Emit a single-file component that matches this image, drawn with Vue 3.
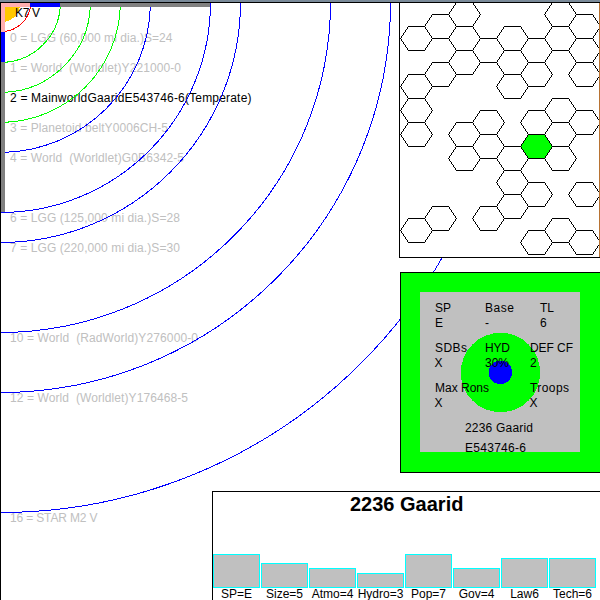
<script setup>
const orbits = [
  [60, '#00ff00'], [90, '#00ff00'], [120, '#00ff00'],
  [150, '#0000ff'], [210, '#0000ff'], [240, '#0000ff'], [330, '#0000ff'],
  [390, '#0000ff'], [510, '#0000ff'],
]
const bodies = [
  { y: 42, t: '0 = LGG (60,000 mi dia.)S=24', w: 162.5 },
  { y: 72, t: '1 = World\u00a0 (Worldlet)Y221000-0', w: 171 },
  { y: 102, t: '2 = MainworldGaaridE543746-6(Temperate)', w: 241.5, main: true },
  { y: 132, t: '3 = Planetoid beltY0006CH-5', w: 158 },
  { y: 162, t: '4 = World\u00a0 (Worldlet)G0B6342-5', w: 174 },
  { y: 222, t: '6 = LGG (125,000 mi dia.)S=28', w: 170 },
  { y: 252, t: '7 = LGG (220,000 mi dia.)S=30', w: 170 },
  { y: 342, t: '10 = World\u00a0 (RadWorld)Y276000-0', w: 188 },
  { y: 402, t: '12 = World\u00a0 (Worldlet)Y176468-5', w: 178 },
  { y: 522, t: '16 = STAR M2 V', w: 87.5 },
]
const columns = [
  [38, 86, 110, 134, 230],
  [26, 74, 218],
  [14, 38, 62, 134, 158],
  [50, 122, 146, 218],
  [38, 62, 86, 158, 182, 206],
  [50, 74, 122, 194, 242],
  [14, 38, 110, 134, 158, 230],
  [26, 50, 74, 122, 194, 242],
]
const hex = (x, y) =>
  `M${x} ${y}L${x + 8} ${y - 12}H${x + 24}L${x + 32} ${y}L${x + 24} ${y + 12}H${x + 8}Z`
const hexes = columns.map((ys, c) => ys.map((y) => hex(400.5 + 24 * c, y + 0.5)).join('')).join('')
const facts = [
  [435, 312, 'SP', 16], [485, 312, 'Base', 29], [540, 312, 'TL', 14],
  [435, 327, 'E', 8], [485, 327, '-', 4], [540, 327, '6', 7],
  [435, 352, 'SDBs', 32], [485, 352, 'HYD', 25], [530, 352, 'DEF CF', 43],
  [434.5, 367, 'X', 8], [485, 367, '30%', 24], [530, 367, '2', 7],
  [435, 392, 'Max Rons', 54], [530, 392, 'Troops', 39],
  [434.5, 407, 'X', 8], [529.5, 407, 'X', 8],
  [465, 432, '2236 Gaarid', 68], [465, 452, 'E543746-6', 61],
]
const bars = [
  ['SP=E', 34], ['Size=5', 25], ['Atmo=4', 20], ['Hydro=3', 15],
  ['Pop=7', 34], ['Gov=4', 20], ['Law6', 30], ['Tech=6', 30],
]
</script>

<template>
  <main class="screen">
    <svg class="space" width="600" height="600" viewBox="0 0 600 600">
      <defs>
        <clipPath id="orbitArea"><rect x="1" y="3" width="599" height="597" /></clipPath>
        <clipPath id="sectorArea"><rect x="400" y="3" width="199" height="254" /></clipPath>
      </defs>

      <g shape-rendering="crispEdges">
        <circle cx="0.5" cy="2.5" r="20" fill="#ffc800" clip-path="url(#orbitArea)" />
        <path d="M1 3H30V7H5V32H1Z" fill="#ffafaf" />
        <path d="M30 3H60V7H30ZM1 32H5V62H1Z" fill="#0000ff" />
        <path d="M60 3H211V7H60ZM1 62H5V212H1Z" fill="#808080" />
      </g>

      <text
        v-for="b in bodies" :key="b.y" x="10" :y="b.y" :textLength="b.w"
        :class="['label', { dim: !b.main }]"
      >{{ b.t }}</text>

      <g fill="none" shape-rendering="crispEdges" clip-path="url(#orbitArea)">
        <path d="M30.5 7A30 30 0 0 1 5 31.5" stroke="#ff0000" />
        <path
          v-for="[r, color] in orbits" :key="r" :stroke="color"
          :d="r < 200 ? `M${r + 0.3} 7A${r} ${r} 0 0 1 5 ${r + 2.3}` : `M${r + 0.5} 2.5A${r} ${r} 0 0 1 0.5 ${r + 2.5}`"
        />
      </g>
      <text class="label" x="15" y="17" textLength="25">K7 V</text>

      <g shape-rendering="crispEdges">
        <rect x="0" y="0" width="600" height="2" fill="#7a8a99" />
        <rect x="0" y="2" width="600" height="1" />
        <rect x="0" y="2" width="1" height="598" />

        <rect x="399.5" y="2.5" width="201" height="255" fill="#fff" stroke="#000" />
        <g clip-path="url(#sectorArea)">
          <path :d="hexes" fill="none" stroke="#000" />
          <path :d="hex(520.5, 146.5)" fill="#00ff00" stroke="#000" />
        </g>
        <rect x="599" y="3" width="1" height="254" fill="#b87333" />

        <rect x="400.5" y="272.5" width="210" height="200" fill="#00ff00" stroke="#000" />
        <rect x="420" y="292" width="160" height="160" fill="#c0c0c0" />
        <circle cx="500.5" cy="372.5" r="39.7" fill="#00ff00" />
        <circle cx="500.5" cy="372.5" r="11.7" fill="#0000ff" />
      </g>
      <text
        v-for="([x, y, t, w], i) in facts" :key="i" class="label"
        :x="x" :y="y" :textLength="w"
      >{{ t }}</text>
    </svg>

    <section class="chart">
      <h1>2236 Gaarid</h1>
      <div class="bars">
        <div v-for="[name, h] in bars" :key="name" class="col">
          <div class="bar" :style="{ height: h + 'px' }"></div>
          <span>{{ name }}</span>
        </div>
      </div>
    </section>
  </main>
</template>

<style>
body { margin: 0; overflow: hidden; background: #fff; }
</style>

<style scoped>
.screen {
  position: relative;
  width: 600px;
  height: 600px;
  overflow: hidden;
  background: #fff;
  font-family: "Liberation Sans", Arial, sans-serif;
  color: #000;
}
.space { display: block; }
.label { font-size: 12px; fill: #000; }
.dim { fill: #c0c0c0; }
.chart {
  position: absolute;
  left: 212px;
  top: 491px;
  box-sizing: border-box;
  width: 400px;
  height: 120px;
  border: 1px solid #000;
  background: #fff;
}
h1 {
  margin: 0;
  height: 62px;
  padding-left: 137px;
  font-size: 20px;
  line-height: 25px;
  font-weight: bold;
}
.bars { display: flex; gap: 1px; height: 46px; }
.col {
  width: 47px;
  display: flex;
  flex-direction: column;
  align-items: center;
}
.bar {
  box-sizing: border-box;
  width: 47px;
  margin-top: auto;
  flex: none;
  background: #c0c0c0;
  border: 1px solid #00ffff;
}
.col span {
  flex: none;
  height: 12px;
  font-size: 12px;
  line-height: 12px;
  white-space: nowrap;
}
</style>
